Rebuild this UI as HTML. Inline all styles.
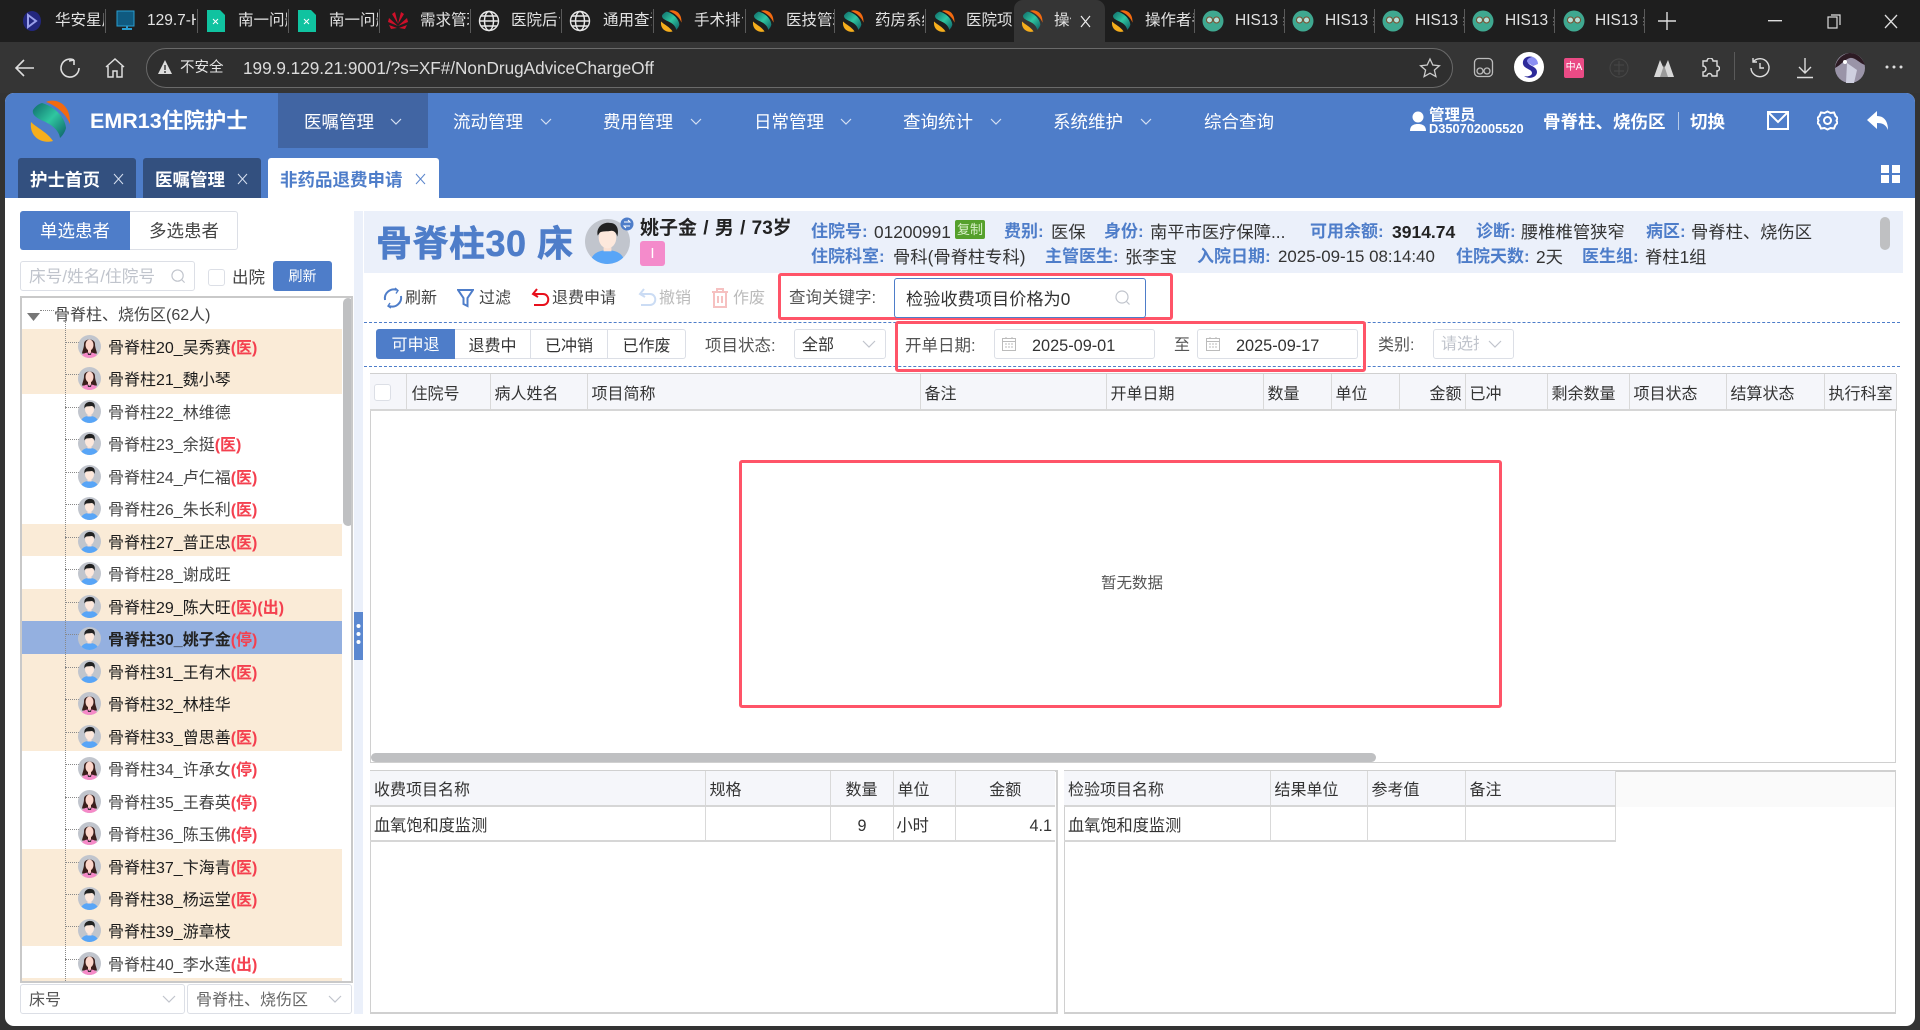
<!DOCTYPE html>
<html lang="zh-CN"><head><meta charset="utf-8"><title>非药品退费申请</title>
<style>
*{box-sizing:border-box}
html,body{margin:0;padding:0;width:1920px;height:1030px;overflow:hidden;background:#333;font-family:"Liberation Sans","Noto Sans CJK SC",sans-serif;font-size:16px;color:#333}
.a,.t,svg.a{position:absolute}
.t{white-space:nowrap;line-height:20px;height:20px}
.top{position:absolute;left:0;top:0;width:1920px;height:42px;background:#1e1e1e}
.tb{position:absolute;left:0;top:42px;width:1920px;height:51px;background:#353535}
.ct{position:absolute;top:10px;height:22px;line-height:22px;width:49px;overflow:hidden;white-space:nowrap;color:#e2e2e2;font-size:15.5px}
.sep{position:absolute;top:9px;width:1px;height:24px;background:#5a5a5a}
.fav{position:absolute;top:10px;width:22px;height:22px}
.app{position:absolute;left:5px;top:93px;width:1910px;height:933px;background:#fff;border-radius:9px;overflow:hidden}
.hd{position:absolute;left:5px;top:93px;width:1910px;height:105px;background:#4e7dc9;border-radius:9px 9px 0 0}
.m{color:#fff;font-size:17.5px}
.tab{position:absolute;top:158px;height:40px;background:#33507f;color:#fff;font-weight:bold;font-size:17.5px;line-height:44px;border-radius:3px 3px 0 0;padding-left:12px;white-space:nowrap}
.tab svg{position:absolute;top:15px;width:11px;height:12px;fill:none;stroke:#d5deee;stroke-width:1}
.tree{position:absolute;left:20px;top:296px;width:333px;height:687px;border:1px solid #c9c9c9;border-width:2px 2px 2px 2px;overflow:hidden;background:#fff}
.rows{position:absolute;left:0;top:31px;width:320px}
.r{position:relative;height:32.47px;line-height:39px;padding-left:86px;font-size:16px;color:#444;white-space:nowrap}
.r:before{content:"";position:absolute;left:43px;top:13px;width:14px;border-top:1px dotted #888}
.r:last-child:before{display:none}
.r svg{position:absolute;left:56px;top:6px;width:23px;height:23px}
.r b{color:#f4404f;font-weight:bold}
.o{background:#faebd7;color:#1c1c1c}
.s{background:#94b0e0;color:#222;font-weight:bold}
.ib{position:absolute;border:1px solid #dcdfe6;border-radius:3px;background:#fff}
.lb{font-weight:bold;color:#4e7dc9;font-size:17px}
.info{color:#333;font-size:17.3px}
.tl{color:#444}
.dis{color:#bbb}
.dash{position:absolute;left:364px;width:1536px;border-top:1px dashed #4e7dc9}
.sg{position:absolute;top:329px;height:30px;line-height:33px;text-align:center;border:1px solid #dcdfe6;border-left:none;color:#333;background:#fff}
.rb{position:absolute;border:3px solid #ff5468;border-radius:3px}
table{position:absolute;border-collapse:collapse;table-layout:fixed;font-size:16px;color:#333}
th{height:35px;font-weight:normal;background:#f5f6fa;text-align:left;padding:5px 0 0 4px;border-right:1px solid #d9d9d9;border-bottom:2px solid #d6d6d6;white-space:nowrap;overflow:hidden;line-height:28px}
.mt th{padding-top:7px}
td{height:35px;padding:4px 3px 0;border-right:1px solid #d9d9d9;border-bottom:2px solid #d6d6d6;white-space:nowrap;line-height:28px;font-size:16.2px}
.box{position:absolute;border:1px solid #d0d0d0;background:#fff}
</style></head><body>
<svg width="0" height="0" style="position:absolute"><defs>
<linearGradient id="gt" x1="0" y1="0" x2="1" y2="1"><stop offset="0" stop-color="#0f6a6a"/><stop offset=".5" stop-color="#2fc6a0"/><stop offset="1" stop-color="#0d5f66"/></linearGradient>
<symbol id="lg" viewBox="0 0 42 42"><path fill="#f36a10" d="M17 2C25-2 42 2 41 24 37 14 28 6 17 2Z"/><path fill="url(#gt)" d="M13 3C24 6 36 16 37 28 36 32 34 35 31 38 30 30 22 24 12 20 6 17 3 14 4 10 6 7 9 4 13 3Z"/><path fill="#f6ae1c" d="M2 22C8 28 18 32 24 41 14 44 0 38 2 22Z"/></symbol>
<symbol id="hs" viewBox="0 0 22 22"><circle cx="11" cy="11" r="10.5" fill="#3fa890"/><circle cx="7.5" cy="10" r="3" fill="#b5e0d8" stroke="#7a5030"/><circle cx="14.5" cy="10" r="3" fill="#b5e0d8" stroke="#7a5030"/></symbol>
<symbol id="gl" viewBox="0 0 22 22"><g fill="none" stroke="#e8e8e8" stroke-width="1.4"><circle cx="11" cy="11" r="9.5"/><ellipse cx="11" cy="11" rx="4.5" ry="9.5"/><path d="M1.5 11h19M3 6h16M3 16h16"/></g></symbol>
<symbol id="m" viewBox="0 0 46 46"><clipPath id="cm"><circle cx="23" cy="23" r="23"/></clipPath><g clip-path="url(#cm)"><rect width="46" height="46" fill="#c1c5cd"/><path d="M5 46C6 36 13 32 23 32S40 36 41 46Z" fill="#58a5f7"/><rect x="19" y="24" width="8" height="9" fill="#fbe0d2"/><ellipse cx="23" cy="19" rx="9" ry="11" fill="#fde8dc"/><path d="M13 17C11 8 19 3 25 4 33 4 35 11 33 18 32 14 30 12 27 12 23 13 17 12 15 14Z" fill="#222"/></g></symbol>
<symbol id="f" viewBox="0 0 46 46"><clipPath id="cf"><circle cx="23" cy="23" r="23"/></clipPath><g clip-path="url(#cf)"><rect width="46" height="46" fill="#c1c5cd"/><path d="M12 18C12 6 34 6 34 18C34 26 37 30 38 37H8C9 30 12 26 12 18Z" fill="#3b1f1c"/><path d="M6 46C7 38 14 35 23 35S39 38 40 46Z" fill="#f58ac8"/><rect x="20" y="26" width="6" height="9" fill="#fbd3c6"/><ellipse cx="23" cy="20" rx="8" ry="11" fill="#fcd6ca"/><path d="M19 35l4 3 4-3-1 5h-6Z" fill="#333"/></g></symbol>
<symbol id="cal" viewBox="0 0 16 16"><g fill="none" stroke="#bbb"><rect x="1.5" y="2.5" width="13" height="12"/><path d="M1.5 5.5h13M4 8h2M7 8h2M10 8h2M4 11h2M7 11h2M10 11h2M5 1v2M11 1v2"/></g></symbol>
<symbol id="chv" viewBox="0 0 14 8"><path d="M1 1l6 6 6-6" fill="none" stroke="#c0c4cc" stroke-width="1.2"/></symbol>
<symbol id="chw" viewBox="0 0 12 7"><path d="M1 1l5 5 5-5" fill="none" stroke="#d5e0f2" stroke-width="1.2"/></symbol>
<symbol id="srch" viewBox="0 0 16 16"><g fill="none" stroke="#c0c4cc" stroke-width="1.2"><circle cx="7" cy="7" r="6"/><path d="M11.5 11.5l3 3"/></g></symbol>
</defs></svg>

<div class="top">
<svg class="fav" style="left:21px" viewBox="0 0 22 22"><ellipse cx="11" cy="11" rx="9" ry="10" fill="#23277e"/><path d="M7 5l8 6-8 6Z" fill="none" stroke="#9aa0ea" stroke-width="2"/></svg><div class="ct" style="left:55px">华安星盾</div><div class="sep" style="left:105px"></div>
<svg class="fav" style="left:114px" viewBox="0 0 22 22"><rect x="3" y="1" width="17" height="15" fill="#0f5a80" stroke="#2a9dd0"/><path d="M8 19h10M13 16v3" stroke="#2a9dd0" stroke-width="2"/></svg><div class="ct" style="left:147px">129.7-HIS</div><div class="sep" style="left:197px"></div>
<svg class="fav" style="left:205px" viewBox="0 0 22 22"><path d="M2 0h13l5 5v17H2Z" fill="#10c3a0"/><path d="M8 9l5 5M13 9l-5 5" stroke="#fff"/></svg><div class="ct" style="left:238px">南一问题</div><div class="sep" style="left:288px"></div>
<svg class="fav" style="left:296px" viewBox="0 0 22 22"><path d="M2 0h13l5 5v17H2Z" fill="#10c3a0"/><path d="M8 9l5 5M13 9l-5 5" stroke="#fff"/></svg><div class="ct" style="left:329px">南一问题</div><div class="sep" style="left:379px"></div>
<svg class="fav" style="left:387px" viewBox="0 0 22 22"><g fill="#d0102a"><path d="M11 14L8 2 5 4Z"/><path d="M11 14L14 2 17 4Z"/><path d="M11 16L2 8 1 12Z"/><path d="M11 16L20 8 21 12Z"/><path d="M10 18L2 15 4 19Z"/><path d="M12 18L20 15 18 19Z"/></g></svg><div class="ct" style="left:420px">需求管理</div><div class="sep" style="left:470px"></div>
<svg class="fav" style="left:478px"><use href="#gl"/></svg><div class="ct" style="left:511px">医院后台</div><div class="sep" style="left:561px"></div>
<svg class="fav" style="left:569px"><use href="#gl"/></svg><div class="ct" style="left:603px">通用查询</div><div class="sep" style="left:653px"></div>
<svg class="fav" style="left:660px"><use href="#lg"/></svg><div class="ct" style="left:694px">手术排台</div><div class="sep" style="left:745px"></div>
<svg class="fav" style="left:752px"><use href="#lg"/></svg><div class="ct" style="left:786px">医技管理</div><div class="sep" style="left:834px"></div>
<svg class="fav" style="left:842px"><use href="#lg"/></svg><div class="ct" style="left:875px">药房系统</div><div class="sep" style="left:925px"></div>
<svg class="fav" style="left:933px"><use href="#lg"/></svg><div class="ct" style="left:966px;width:46px">医院项目</div>
<div class="a" style="left:1014px;top:0;width:91px;height:42px;background:#353535;border-radius:9px 9px 0 0"></div>
<svg class="fav" style="left:1021px"><use href="#lg"/></svg><div class="ct" style="left:1054px;width:17px">操作者</div>
<svg class="a" style="left:1080px;top:15px" width="11" height="13" stroke="#eee" stroke-width="1.2"><path d="M1 1l9 11M10 1L1 12"/></svg>
<svg class="fav" style="left:1111px"><use href="#lg"/></svg><div class="ct" style="left:1145px">操作者手</div><div class="sep" style="left:1194px"></div>
<svg class="fav" style="left:1202px"><use href="#hs"/></svg><div class="ct" style="left:1235px">HIS13 纟</div><div class="sep" style="left:1284px"></div>
<svg class="fav" style="left:1292px"><use href="#hs"/></svg><div class="ct" style="left:1325px">HIS13 纟</div><div class="sep" style="left:1374px"></div>
<svg class="fav" style="left:1382px"><use href="#hs"/></svg><div class="ct" style="left:1415px">HIS13 纟</div><div class="sep" style="left:1464px"></div>
<svg class="fav" style="left:1472px"><use href="#hs"/></svg><div class="ct" style="left:1505px">HIS13 纟</div><div class="sep" style="left:1554px"></div>
<svg class="fav" style="left:1563px"><use href="#hs"/></svg><div class="ct" style="left:1595px">HIS13 纟</div><div class="sep" style="left:1644px"></div>
<svg class="a" style="left:1657px;top:11px" width="20" height="20"><path d="M10 1v18M1 10h18" stroke="#ddd" stroke-width="1.4"/></svg>
<svg class="a" style="left:1768px;top:20px" width="14" height="2"><rect width="14" height="1.4" fill="#ddd"/></svg>
<svg class="a" style="left:1827px;top:14px" width="14" height="15" fill="none" stroke="#ddd" stroke-width="1.2"><rect x="1" y="3" width="9" height="11"/><path d="M4 1h9v10"/></svg>
<svg class="a" style="left:1884px;top:14px" width="14" height="15" stroke="#ddd" stroke-width="1.3"><path d="M1 1l12 13M13 1L1 14"/></svg>
</div>

<div class="tb">
<svg class="a" style="left:14px;top:15px" width="22" height="22" fill="none" stroke="#ddd" stroke-width="1.6"><path d="M20 11H2M10 3l-8 8 8 8"/></svg>
<svg class="a" style="left:59px;top:15px" width="22" height="22" fill="none" stroke="#ddd" stroke-width="1.6"><path d="M15 3A9 9 0 1 0 20 11M15 3v5M15 3l-5 1"/></svg>
<svg class="a" style="left:104px;top:15px" width="22" height="22" fill="none" stroke="#ddd" stroke-width="1.5"><path d="M2 10l9-8 9 8M4 9v11h5v-6h4v6h5V9"/></svg>
<div class="a" style="left:146px;top:6px;width:1307px;height:40px;border:1px solid #6a6a6a;border-radius:20px;background:#2f2f2f"></div>
<svg class="a" style="left:157px;top:17px" width="16" height="16"><path d="M8 1l7 14H1Z" fill="#ddd"/><path d="M8 6v5M8 12v2" stroke="#333" stroke-width="1.4"/></svg>
<div class="t" style="left:180px;top:16px;color:#e5e5e5;font-size:14.5px">不安全</div>
<div class="t" style="left:243px;top:16px;color:#dcdcdc;font-size:17.15px">199.9.129.21:9001/?s=XF#/NonDrugAdviceChargeOff</div>
<svg class="a" style="left:1419px;top:15px" width="22" height="22" fill="none" stroke="#ccc" stroke-width="1.3"><path d="M11 2l2.8 6 6.6.7-5 4.4 1.5 6.5-5.9-3.4-5.9 3.4 1.5-6.5-5-4.4 6.6-.7Z"/></svg>
<svg class="a" style="left:1473px;top:15px" width="22" height="22" fill="none" stroke="#bbb" stroke-width="1.3"><rect x="1.5" y="1.5" width="18" height="18" rx="4"/><circle cx="7" cy="14" r="3"/><circle cx="14" cy="14" r="3"/></svg>
<svg class="a" style="left:1514px;top:10px" width="30" height="30"><circle cx="15" cy="15" r="15" fill="#fff"/><path d="M19 5c-6-2-11 2-10 7 1 5 9 5 9 9 0 3-5 4-8 3 6 4 13 1 13-4 0-6-9-6-9-10 0-3 3-5 5-5Z" fill="#2d2a9a"/><path d="M19 5c3 1 5 4 5 7l-5 2c-3-2-6-3-6-5 0-2 3-4 6-4Z" fill="#8b8ff2"/></svg>
<div class="a" style="left:1564px;top:16px;width:20px;height:20px;background:#ea4b85;border-radius:2px;color:#fff;font-size:10px;line-height:20px;text-align:center;white-space:nowrap;overflow:hidden">中A</div>
<svg class="a" style="left:1609px;top:16px" width="20" height="20" fill="none" stroke="#474747"><circle cx="10" cy="10" r="9"/><path d="M10 3v14M5 7h10M5 13h10"/></svg>
<svg class="a" style="left:1654px;top:18px" width="20" height="17"><path d="M0 17L6 0l4 9 4-9 6 17Z" fill="#d8d8d8"/><path d="M10 5l-4 12h8Z" fill="#9a9a9a"/></svg>
<svg class="a" style="left:1700px;top:16px" width="20" height="20" fill="none" stroke="#ddd" stroke-width="1.4"><path d="M7 3a3 3 0 0 1 6 0h4v5a2.500 2.500 0 0 1 0 5v5h-5a2.500 2.500 0 0 0-5 0H3v-4a3 3 0 0 0 0-6V3Z"/></svg>
<div class="a" style="left:1734px;top:10px;width:1px;height:28px;background:#5a5a5a"></div>
<svg class="a" style="left:1749px;top:15px" width="22" height="22" fill="none" stroke="#ddd" stroke-width="1.4"><path d="M4 5a9 9 0 1 1-2 6M4 1v4h4M11 6v5h4"/></svg>
<svg class="a" style="left:1796px;top:15px" width="18" height="22" fill="none" stroke="#ddd" stroke-width="1.4"><path d="M9 1v15M3 10l6 6 6-6M1 20.500h16"/></svg>
<svg class="a" style="left:1835px;top:11px" width="30" height="30"><circle cx="15" cy="15" r="15" fill="#9a94a8"/><path d="M0 15C2 3 12 0 15 0c8 0 13 6 15 12-6-2-10-8-15-7S6 12 0 15Z" fill="#2d1b24"/><path d="M12 10l10 7-3 13h-8Z" fill="#cfd0e0"/><circle cx="10" cy="9" r="2" fill="#fff"/></svg>
<svg class="a" style="left:1885px;top:23px" width="18" height="4" fill="#ddd"><circle cx="2" cy="2" r="1.500"/><circle cx="9" cy="2" r="1.500"/><circle cx="16" cy="2" r="1.500"/></svg>
</div>

<div class="app"></div>
<div class="hd"></div>
<div class="a" style="left:278px;top:93px;width:150px;height:55px;background:#4165a3"></div>
<svg class="a" style="left:29px;top:100px" width="42" height="42"><use href="#lg"/></svg>
<div class="t" style="left:90px;top:110px;color:#fff;font-weight:bold;font-size:21.5px;line-height:22px;height:22px">EMR13住院护士</div>
<div class="t m" style="left:304px;top:112px">医嘱管理</div><svg class="a" style="left:390px;top:118px" width="12" height="7"><use href="#chw"/></svg>
<div class="t m" style="left:453px;top:112px">流动管理</div><svg class="a" style="left:540px;top:118px" width="12" height="7"><use href="#chw"/></svg>
<div class="t m" style="left:603px;top:112px">费用管理</div><svg class="a" style="left:690px;top:118px" width="12" height="7"><use href="#chw"/></svg>
<div class="t m" style="left:754px;top:112px">日常管理</div><svg class="a" style="left:840px;top:118px" width="12" height="7"><use href="#chw"/></svg>
<div class="t m" style="left:903px;top:112px">查询统计</div><svg class="a" style="left:990px;top:118px" width="12" height="7"><use href="#chw"/></svg>
<div class="t m" style="left:1053px;top:112px">系统维护</div><svg class="a" style="left:1140px;top:118px" width="12" height="7"><use href="#chw"/></svg>
<div class="t m" style="left:1204px;top:112px">综合查询</div>
<svg class="a" style="left:1410px;top:111px" width="16" height="20" fill="#fff"><circle cx="8" cy="6" r="5.500"/><path d="M0 20c0-5 3-7 8-7s8 2 8 7Z"/></svg>
<div class="t" style="left:1429px;top:106px;color:#fff;font-weight:bold;font-size:15.500px">管理员</div>
<div class="t" style="left:1429px;top:119px;color:#fff;font-weight:bold;font-size:12.800px">D350702005520</div>
<div class="t" style="left:1543px;top:112px;color:#fff;font-weight:bold;font-size:17.500px">骨脊柱、烧伤区</div>
<div class="a" style="left:1678px;top:112px;width:1px;height:18px;background:#b8cbe8"></div>
<div class="t" style="left:1690px;top:112px;color:#fff;font-weight:bold;font-size:17.500px">切换</div>
<svg class="a" style="left:1767px;top:111px" width="22" height="19" fill="none" stroke="#fff" stroke-width="2"><rect x="1" y="1" width="20" height="17"/><path d="M1 1l10 10L21 1"/></svg>
<svg class="a" style="left:1817px;top:110px" width="21" height="21" fill="none" stroke="#fff" stroke-width="2"><path d="M10.500 1.500l3 1.500 3.500-.5 1.500 3.500 2 2-1 2.500 1 2.500-2 2-1.500 3.500-3.500-.5-3 1.500-3-1.500-3.500.5-1.500-3.500-2-2 1-2.500-1-2.500 2-2 1.500-3.500 3.500.5Z"/><circle cx="10.500" cy="10.500" r="3.500"/></svg>
<svg class="a" style="left:1867px;top:111px" width="21" height="19"><path d="M0 9L10 0v5c7 0 11 5 11 14-2-5-5-7-11-7v6Z" fill="#fff"/></svg>

<div class="tab" style="left:18px;width:118px">护士首页<svg style="left:95px"><path d="M1 1l9 10M10 1L1 11"/></svg></div>
<div class="tab" style="left:143px;width:118px">医嘱管理<svg style="left:94px"><path d="M1 1l9 10M10 1L1 11"/></svg></div>
<div class="tab" style="left:268px;width:171px;background:#fff;color:#4e7dc9">非药品退费申请<svg style="left:147px;stroke:#5c86cc"><path d="M1 1l9 10M10 1L1 11"/></svg></div>
<svg class="a" style="left:1881px;top:165px" width="19" height="18" fill="#fff"><rect width="8" height="8"/><rect x="11" width="8" height="8"/><rect y="10" width="8" height="8"/><rect x="11" y="10" width="8" height="8"/></svg>

<!-- Sidebar -->
<div class="a" style="left:20px;top:211px;width:218px;height:39px;border:1px solid #dcdfe6;border-radius:3px"></div>
<div class="a" style="left:20px;top:211px;width:110px;height:39px;background:#4e7dc9;border-radius:3px 0 0 3px;color:#fff;text-align:center;line-height:40px;font-size:17.500px">单选患者</div>
<div class="a" style="left:130px;top:211px;width:108px;height:39px;text-align:center;line-height:40px;font-size:17.500px;color:#444">多选患者</div>
<div class="ib" style="left:20px;top:261px;width:175px;height:30px"></div>
<div class="t" style="left:29px;top:267px;color:#c0c4cc;font-size:16.700px">床号/姓名/住院号</div>
<svg class="a" style="left:171px;top:269px" width="15" height="15"><use href="#srch"/></svg>
<div class="ib" style="left:208px;top:269px;width:17px;height:17px"></div>
<div class="t" style="left:232px;top:268px;color:#444;font-size:16.500px">出院</div>
<div class="a" style="left:273px;top:261px;width:59px;height:30px;background:#4e7dc9;border-radius:3px;color:#fff;text-align:center;line-height:30px;font-size:14px">刷新</div>

<div class="tree">
<svg class="a" style="left:5px;top:15px" width="13" height="8"><path d="M0 0h13L6.500 8Z" fill="#777"/></svg>
<div class="a" style="left:18px;top:12px;width:14px;border-top:1px dotted #888"></div>
<div class="t" style="left:32px;top:8px;color:#444">骨脊柱、烧伤区(62人)</div>
<div class="rows">
<div class="r o"><svg><use href="#f"/></svg>骨脊柱20_吴秀赛<b>(医)</b></div>
<div class="r o"><svg><use href="#f"/></svg>骨脊柱21_魏小琴</div>
<div class="r"><svg><use href="#m"/></svg>骨脊柱22_林维德</div>
<div class="r"><svg><use href="#m"/></svg>骨脊柱23_余挺<b>(医)</b></div>
<div class="r"><svg><use href="#m"/></svg>骨脊柱24_卢仁福<b>(医)</b></div>
<div class="r"><svg><use href="#m"/></svg>骨脊柱26_朱长利<b>(医)</b></div>
<div class="r o"><svg><use href="#m"/></svg>骨脊柱27_普正忠<b>(医)</b></div>
<div class="r"><svg><use href="#m"/></svg>骨脊柱28_谢成旺</div>
<div class="r o"><svg><use href="#m"/></svg>骨脊柱29_陈大旺<b>(医)</b><b>(出)</b></div>
<div class="r s"><svg><use href="#m"/></svg>骨脊柱30_姚子金<b>(停)</b></div>
<div class="r o"><svg><use href="#m"/></svg>骨脊柱31_王有木<b>(医)</b></div>
<div class="r o"><svg><use href="#f"/></svg>骨脊柱32_林桂华</div>
<div class="r o"><svg><use href="#m"/></svg>骨脊柱33_曾思善<b>(医)</b></div>
<div class="r"><svg><use href="#f"/></svg>骨脊柱34_许承女<b>(停)</b></div>
<div class="r"><svg><use href="#f"/></svg>骨脊柱35_王春英<b>(停)</b></div>
<div class="r"><svg><use href="#f"/></svg>骨脊柱36_陈玉佛<b>(停)</b></div>
<div class="r o"><svg><use href="#f"/></svg>骨脊柱37_卞海青<b>(医)</b></div>
<div class="r o"><svg><use href="#m"/></svg>骨脊柱38_杨运堂<b>(医)</b></div>
<div class="r o"><svg><use href="#m"/></svg>骨脊柱39_游章枝</div>
<div class="r"><svg><use href="#f"/></svg>骨脊柱40_李水莲<b>(出)</b></div>
<div class="r o"></div>
</div>
<div class="a" style="left:43px;top:24px;height:665px;border-left:1px dotted #888"></div>
<div class="a" style="left:321px;top:0;width:10px;height:228px;background:#bfc0c2;border-radius:5px"></div>
</div>
<div class="ib" style="left:20px;top:984px;width:165px;height:30px"></div><div class="t" style="left:29px;top:991px;color:#555">床号</div><svg class="a" style="left:162px;top:995px" width="14" height="8"><use href="#chv"/></svg>
<div class="ib" style="left:187px;top:984px;width:165px;height:30px"></div><div class="t" style="left:196px;top:991px;color:#666">骨脊柱、烧伤区</div><svg class="a" style="left:328px;top:995px" width="14" height="8"><use href="#chv"/></svg>

<div class="a" style="left:354px;top:211px;width:9px;height:803px;background:#ebf0fa"></div>
<div class="a" style="left:354px;top:612px;width:9px;height:48px;background:#5b88d0"></div>
<svg class="a" style="left:354px;top:622px" width="9" height="30" fill="#fff"><circle cx="4.500" cy="4" r="2"/><circle cx="4.500" cy="12" r="2"/><circle cx="4.500" cy="20" r="2"/></svg>

<!-- Patient bar -->
<div class="a" style="left:364px;top:211px;width:1539px;height:62px;background:#ebf0fa"></div>
<div class="t" style="left:376px;top:221px;height:46px;line-height:46px;font-size:36px;font-weight:bold;color:#4e7dc9;letter-spacing:.5px;-webkit-text-stroke:.5px #4e7dc9">骨脊柱30 床</div>
<svg class="a" style="left:585px;top:219px" width="45" height="45"><use href="#m"/></svg>
<svg class="a" style="left:620px;top:216px" width="14" height="15"><circle cx="7" cy="8" r="6.500" fill="#4e7dc9"/><path d="M4 6h6l-2-2M10 10H4l2 2" stroke="#fff" fill="none"/></svg>
<div class="t" style="left:640px;top:219px;font-weight:bold;font-size:19px;word-spacing:1px;color:#222">姚子金 / 男 / 73岁</div>
<div class="a" style="left:640px;top:241px;width:25px;height:25px;background:#f48bcb;border-radius:3px;color:#fff;text-align:center;line-height:25px;font-size:15px">I</div>
<div class="t lb" style="left:811px;top:221.5px">住院号:</div><div class="t info" style="left:874px;top:221.5px">01200991</div>
<div class="a" style="left:955px;top:220px;width:30px;height:19px;background:#55a02c;border-radius:2px;color:#d8f0c8;font-size:13px;text-align:center;line-height:19px">复制</div>
<div class="t lb" style="left:1004px;top:221.5px">费别:</div><div class="t info" style="left:1051px;top:221.5px">医保</div>
<div class="t lb" style="left:1104px;top:221.5px">身份:</div><div class="t info" style="left:1150px;top:221.5px">南平市医疗保障...</div>
<div class="t lb" style="left:1310px;top:221.5px">可用余额:</div><div class="t" style="left:1392px;top:221.5px;font-weight:bold;font-size:17.500px;color:#222">3914.74</div>
<div class="t lb" style="left:1476px;top:221.5px">诊断:</div><div class="t info" style="left:1521px;top:221.5px">腰椎椎管狭窄</div>
<div class="t lb" style="left:1646px;top:221.5px">病区:</div><div class="t info" style="left:1691px;top:221.5px">骨脊柱、烧伤区</div>
<div class="t lb" style="left:811px;top:247px">住院科室:</div><div class="t info" style="left:893px;top:247px">骨科(骨脊柱专科)</div>
<div class="t lb" style="left:1045px;top:247px">主管医生:</div><div class="t info" style="left:1125px;top:247px">张李宝</div>
<div class="t lb" style="left:1197px;top:247px">入院日期:</div><div class="t info" style="left:1278px;top:247px;font-size:16.900px">2025-09-15 08:14:40</div>
<div class="t lb" style="left:1456px;top:247px">住院天数:</div><div class="t info" style="left:1536px;top:247px">2天</div>
<div class="t lb" style="left:1582px;top:247px">医生组:</div><div class="t info" style="left:1645px;top:247px">脊柱1组</div>
<div class="a" style="left:1880px;top:217px;width:10px;height:33px;background:#bfc0c2;border-radius:5px"></div>

<!-- Toolbar -->
<svg class="a" style="left:382px;top:287px" width="22" height="22" fill="none" stroke="#4e7dc9" stroke-width="2"><path d="M3 13A9 9 0 0 1 15 3M19 9a9 9 0 0 1-12 10"/><path d="M13 1l3 2.500-2 3M9 21l-3-2 2-3" stroke-width="1.400"/></svg>
<div class="t tl" style="left:405px;top:289px">刷新</div>
<svg class="a" style="left:457px;top:288px" width="17" height="20" fill="none" stroke="#4e7dc9" stroke-width="2"><path d="M1 2h15l-5.500 8v8l-4-2v-6Z"/></svg>
<div class="t tl" style="left:479px;top:289px">过滤</div>
<svg class="a" style="left:531px;top:288px" width="19" height="20" fill="none" stroke="#e8101c" stroke-width="2"><path d="M6 1L2 6l5 3M3 6h9c7 0 7 11 0 11H3"/></svg>
<div class="t tl" style="left:552px;top:289px">退费申请</div>
<svg class="a" style="left:638px;top:288px" width="19" height="20" fill="none" stroke="#cbdcf4" stroke-width="2"><path d="M6 1L2 6l5 3M3 6h9c7 0 7 11 0 11H3"/></svg>
<div class="t dis" style="left:659px;top:289px">撤销</div>
<svg class="a" style="left:711px;top:288px" width="18" height="20" fill="none" stroke="#f6c1c1" stroke-width="2"><path d="M1 4h16M6 4V1h6v3M3 4v15h12V4M7 8v7M11 8v7"/></svg>
<div class="t dis" style="left:733px;top:289px">作废</div>
<div class="rb" style="left:778px;top:273px;width:395px;height:47px"></div>
<div class="t" style="left:789px;top:288px;color:#555;font-size:16.500px">查询关键字:</div>
<div class="a" style="left:894px;top:278px;width:252px;height:40px;border:1px solid #4e7dc9;border-radius:3px;background:#fff"></div>
<div class="t" style="left:906px;top:289px;color:#333;font-size:17.200px">检验收费项目价格为0</div>
<svg class="a" style="left:1115px;top:290px" width="16" height="16"><use href="#srch"/></svg>
<div class="dash" style="top:322px"></div>
<div class="dash" style="top:366px"></div>

<!-- filters -->
<div class="a" style="left:376px;top:329px;width:79px;height:30px;background:#4e7dc9;color:#fff;border-radius:3px 0 0 3px;text-align:center;line-height:33px">可申退</div>
<div class="sg" style="left:455px;width:76px">退费中</div>
<div class="sg" style="left:531px;width:77px;border-left:none">已冲销</div>
<div class="sg" style="left:608px;width:78px;border-radius:0 3px 3px 0">已作废</div>
<div class="t" style="left:705px;top:335.500px;color:#555;font-size:16.500px">项目状态:</div>
<div class="ib" style="left:794px;top:329px;width:92px;height:30px"></div><div class="t" style="left:802px;top:335.500px">全部</div><svg class="a" style="left:862px;top:340px" width="14" height="8"><use href="#chv"/></svg>
<div class="rb" style="left:895px;top:321px;width:471px;height:51px"></div>
<div class="t" style="left:905px;top:335.500px;color:#555;font-size:16.500px">开单日期:</div>
<div class="ib" style="left:994px;top:329px;width:161px;height:30px"></div><svg class="a" style="left:1001px;top:336px" width="16" height="16"><use href="#cal"/></svg><div class="t" style="left:1032px;top:336px;font-size:16.300px">2025-09-01</div>
<div class="t" style="left:1174px;top:335.500px;color:#555">至</div>
<div class="ib" style="left:1197px;top:329px;width:161px;height:30px"></div><svg class="a" style="left:1205px;top:336px" width="16" height="16"><use href="#cal"/></svg><div class="t" style="left:1236px;top:336px;font-size:16.300px">2025-09-17</div>
<div class="t" style="left:1378px;top:335.500px;color:#555">类别:</div>
<div class="ib" style="left:1433px;top:329px;width:81px;height:30px"></div><div class="t" style="left:1441px;top:335px;color:#c0c4cc;width:38px;overflow:hidden">请选择</div><svg class="a" style="left:1488px;top:340px" width="14" height="8"><use href="#chv"/></svg>

<!-- Main table -->
<div class="box" style="left:370px;top:373px;width:1526px;height:390px;border-top-width:2px"></div>
<table class="mt" style="left:370px;top:374px;width:1526px"><colgroup><col style="width:36px"><col style="width:84px"><col style="width:97px"><col style="width:333px"><col style="width:186px"><col style="width:157px"><col style="width:68px"><col style="width:68px"><col style="width:66px"><col style="width:82px"><col style="width:82px"><col style="width:97px"><col style="width:98px"><col style="width:72px"></colgroup>
<tr><th></th><th style="padding-left:5px">住院号</th><th>病人姓名</th><th>项目简称</th><th>备注</th><th>开单日期</th><th>数量</th><th>单位</th><th style="text-align:right;padding-right:3px;padding-left:0">金额</th><th>已冲</th><th>剩余数量</th><th>项目状态</th><th>结算状态</th><th>执行科室</th></tr></table>
<div class="ib" style="left:374px;top:384px;width:17px;height:17px"></div>
<div class="t" style="left:1101px;top:572px;color:#555;font-size:15.500px;margin-top:2px">暂无数据</div>
<div class="rb" style="left:739px;top:460px;width:763px;height:248px"></div>
<div class="a" style="left:371px;top:753px;width:1005px;height:9px;background:#bfc0c2;border-radius:5px"></div>

<!-- Lower left -->
<div class="box" style="left:370px;top:770px;width:688px;height:244px;border-width:2px 2px 2px 1px"></div>
<table style="left:370px;top:771px;width:685px"><colgroup><col style="width:335px"><col style="width:125px"><col style="width:63px"><col style="width:62px"><col style="width:100px"></colgroup>
<tr><th>收费项目名称</th><th>规格</th><th style="text-align:center;padding-left:0">数量</th><th>单位</th><th style="text-align:center;padding-left:0;border-right:none">金额</th></tr>
<tr><td style="padding-left:4px">血氧饱和度监测</td><td></td><td style="text-align:center;padding-left:4px">9</td><td>小时</td><td style="text-align:right;border-right:none">4.1</td></tr></table>

<!-- Lower right -->
<div class="box" style="left:1064px;top:770px;width:832px;height:244px;border-width:2px 1px 2px 1px"></div>
<div class="a" style="left:1615px;top:772px;width:280px;height:35px;background:#fafafa"></div>
<table style="left:1064px;top:771px;width:551px"><colgroup><col style="width:206px"><col style="width:97px"><col style="width:98px"><col style="width:150px"></colgroup>
<tr><th>检验项目名称</th><th>结果单位</th><th>参考值</th><th>备注</th></tr>
<tr><td style="padding-left:4px">血氧饱和度监测</td><td></td><td></td><td></td></tr></table>
</body></html>
